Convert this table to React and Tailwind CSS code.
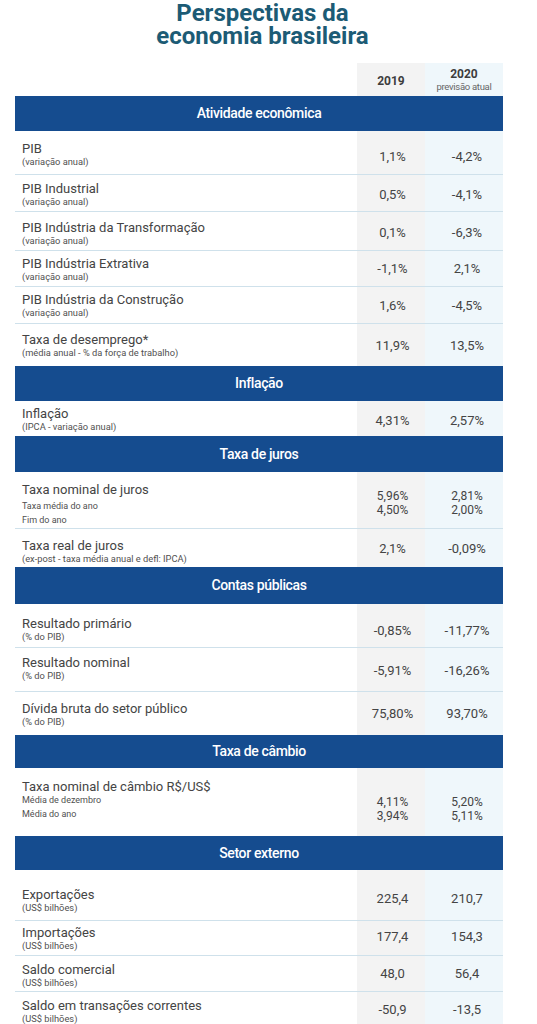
import React from 'react'

const sections = [
  {
    title: 'Atividade econômica',
    band: 'h-[35px]',
    rows: [
      { label: 'PIB', sub: ['(variação anual)'], v19: ['1,1%'], v20: ['-4,2%'], h: 'h-[43px]', lt: 'pt-[10px]', vt: 'pt-[18px]' },
      { label: 'PIB Industrial', sub: ['(variação anual)'], v19: ['0,5%'], v20: ['-4,1%'], h: 'h-[37px]', lt: 'pt-[6px]', vt: 'pt-[12px]' },
      { label: 'PIB Indústria da Transformação', sub: ['(variação anual)'], v19: ['0,1%'], v20: ['-6,3%'], h: 'h-[39px]', lt: 'pt-[8px]', vt: 'pt-[13px]' },
      { label: 'PIB Indústria Extrativa', sub: ['(variação anual)'], v19: ['-1,1%'], v20: ['2,1%'], h: 'h-[36px]', lt: 'pt-[5px]', vt: 'pt-[10px]' },
      { label: 'PIB Indústria da Construção', sub: ['(variação anual)'], v19: ['1,6%'], v20: ['-4,5%'], h: 'h-[37px]', lt: 'pt-[5px]', vt: 'pt-[11px]' },
      { label: 'Taxa de desemprego*', sub: ['(média anual - % da força de trabalho)'], v19: ['11,9%'], v20: ['13,5%'], h: 'h-[43px]', lt: 'pt-[8px]', vt: 'pt-[14px]' },
    ],
  },
  {
    title: 'Inflação',
    band: 'h-[35px]',
    rows: [
      { label: 'Inflação', sub: ['(IPCA - variação anual)'], v19: ['4,31%'], v20: ['2,57%'], h: 'h-[35px]', lt: 'pt-[5px]', vt: 'pt-[12px]' },
    ],
  },
  {
    title: 'Taxa de juros',
    band: 'h-[36px]',
    rows: [
      { label: 'Taxa nominal de juros', sub: ['Taxa média do ano', 'Fim do ano'], multi: true, gap: 'mt-[3px]', v19: ['5,96%', '4,50%'], v20: ['2,81%', '2,00%'], h: 'h-[56px]', lt: 'pt-[10px]', vt: 'pt-[18px]' },
      { label: 'Taxa real de juros', sub: ['(ex-post - taxa média anual e defl: IPCA)'], v19: ['2,1%'], v20: ['-0,09%'], h: 'h-[39px]', lt: 'pt-[9px]', vt: 'pt-[12px]' },
    ],
  },
  {
    title: 'Contas públicas',
    band: 'h-[37px]',
    rows: [
      { label: 'Resultado primário', sub: ['(% do PIB)'], v19: ['-0,85%'], v20: ['-11,77%'], h: 'h-[43px]', lt: 'pt-[12px]', vt: 'pt-[19px]' },
      { label: 'Resultado nominal', sub: ['(% do PIB)'], v19: ['-5,91%'], v20: ['-16,26%'], h: 'h-[44px]', lt: 'pt-[7px]', vt: 'pt-[15px]' },
      { label: 'Dívida bruta do setor público', sub: ['(% do PIB)'], v19: ['75,80%'], v20: ['93,70%'], h: 'h-[44px]', lt: 'pt-[9px]', vt: 'pt-[14px]' },
    ],
  },
  {
    title: 'Taxa de câmbio',
    band: 'h-[33px]',
    rows: [
      { label: 'Taxa nominal de câmbio R$/US$', sub: ['Média de dezembro', 'Média do ano'], multi: true, gap: 'mt-0', v19: ['4,11%', '3,94%'], v20: ['5,20%', '5,11%'], h: 'h-[68px]', lt: 'pt-[11px]', vt: 'pt-[28px]' },
    ],
  },
  {
    title: 'Setor externo',
    band: 'h-[34px]',
    rows: [
      { label: 'Exportações', sub: ['(US$ bilhões)'], v19: ['225,4'], v20: ['210,7'], h: 'h-[50px]', lt: 'pt-[17px]', vt: 'pt-[21px]' },
      { label: 'Importações', sub: ['(US$ bilhões)'], v19: ['177,4'], v20: ['154,3'], h: 'h-[35px]', lt: 'pt-[4px]', vt: 'pt-[8px]' },
      { label: 'Saldo comercial', sub: ['(US$ bilhões)'], v19: ['48,0'], v20: ['56,4'], h: 'h-[36px]', lt: 'pt-[6px]', vt: 'pt-[10px]' },
      { label: 'Saldo em transações correntes', sub: ['(US$ bilhões)'], v19: ['-50,9'], v20: ['-13,5'], h: 'h-[40px]', lt: 'pt-[6px]', vt: 'pt-[10px]' },
    ],
  },
]

function Values({ items, multi }) {
  return multi ? (
    <div className="text-[12px] leading-[13.7px]">
      {items.map((v) => (
        <div key={v}>{v}</div>
      ))}
    </div>
  ) : (
    <div className="text-[13px] leading-[15px]">{items[0]}</div>
  )
}

function Row({ row, first }) {
  return (
    <div
      className={`grid grid-cols-[342px_68px_78px] ${row.h} ${first ? '' : 'border-t border-[#cfe1eb]'}`}
    >
      <div className={`pl-[7px] ${row.lt}`}>
        <div className="text-[13px] leading-[15px] text-[#444]">{row.label}</div>
        {row.multi ? (
          <div className={`${row.gap} text-[9px] leading-[13.5px] text-[#505050]`}>
            {row.sub.map((s) => (
              <div key={s}>{s}</div>
            ))}
          </div>
        ) : (
          <div className="text-[9.3px] leading-[11px] text-[#505050]">{row.sub[0]}</div>
        )}
      </div>
      <div className={`bg-[#f3f3f3] text-center pl-[3px] text-[#444] ${row.vt}`}>
        <Values items={row.v19} multi={row.multi} />
      </div>
      <div className={`bg-[#eff7fb] text-center pl-[6px] text-[#444] ${row.vt}`}>
        <Values items={row.v20} multi={row.multi} />
      </div>
    </div>
  )
}

export default function App() {
  return (
    <div className="w-[537px] min-h-[1024px] bg-white overflow-hidden font-['Roboto','Noto_Sans',sans-serif]">
      <h1 className="w-[525px] pt-[2px] text-center text-[24px] leading-[23px] font-bold text-[#1c5b75]">
        Perspectivas da
        <br />
        economia brasileira
      </h1>

      <div className="ml-[15px] mt-[15px] w-[488px]">
        {/* cabeçalho das colunas */}
        <div className="grid grid-cols-[342px_68px_78px] h-[33px]">
          <div />
          <div className="bg-[#f3f3f3] flex items-center justify-center pt-[2px] text-[12px] font-bold text-[#3d3d3d]">
            2019
          </div>
          <div className="bg-[#eff7fb] flex flex-col items-center justify-center pt-[1px]">
            <span className="text-[12px] leading-[13px] font-bold text-[#3d3d3d]">2020</span>
            <span className="text-[9.5px] leading-[11px] tracking-[-0.3px] text-[#666]">previsão atual</span>
          </div>
        </div>

        {sections.map((sec) => (
          <div key={sec.title}>
            <div
              className={`${sec.band} bg-[#154c8f] flex items-center justify-center text-[14px] font-medium tracking-[-0.35px] text-white`}
            >
              {sec.title}
            </div>
            {sec.rows.map((row, i) => (
              <Row key={row.label} row={row} first={i === 0} />
            ))}
          </div>
        ))}
      </div>
    </div>
  )
}
